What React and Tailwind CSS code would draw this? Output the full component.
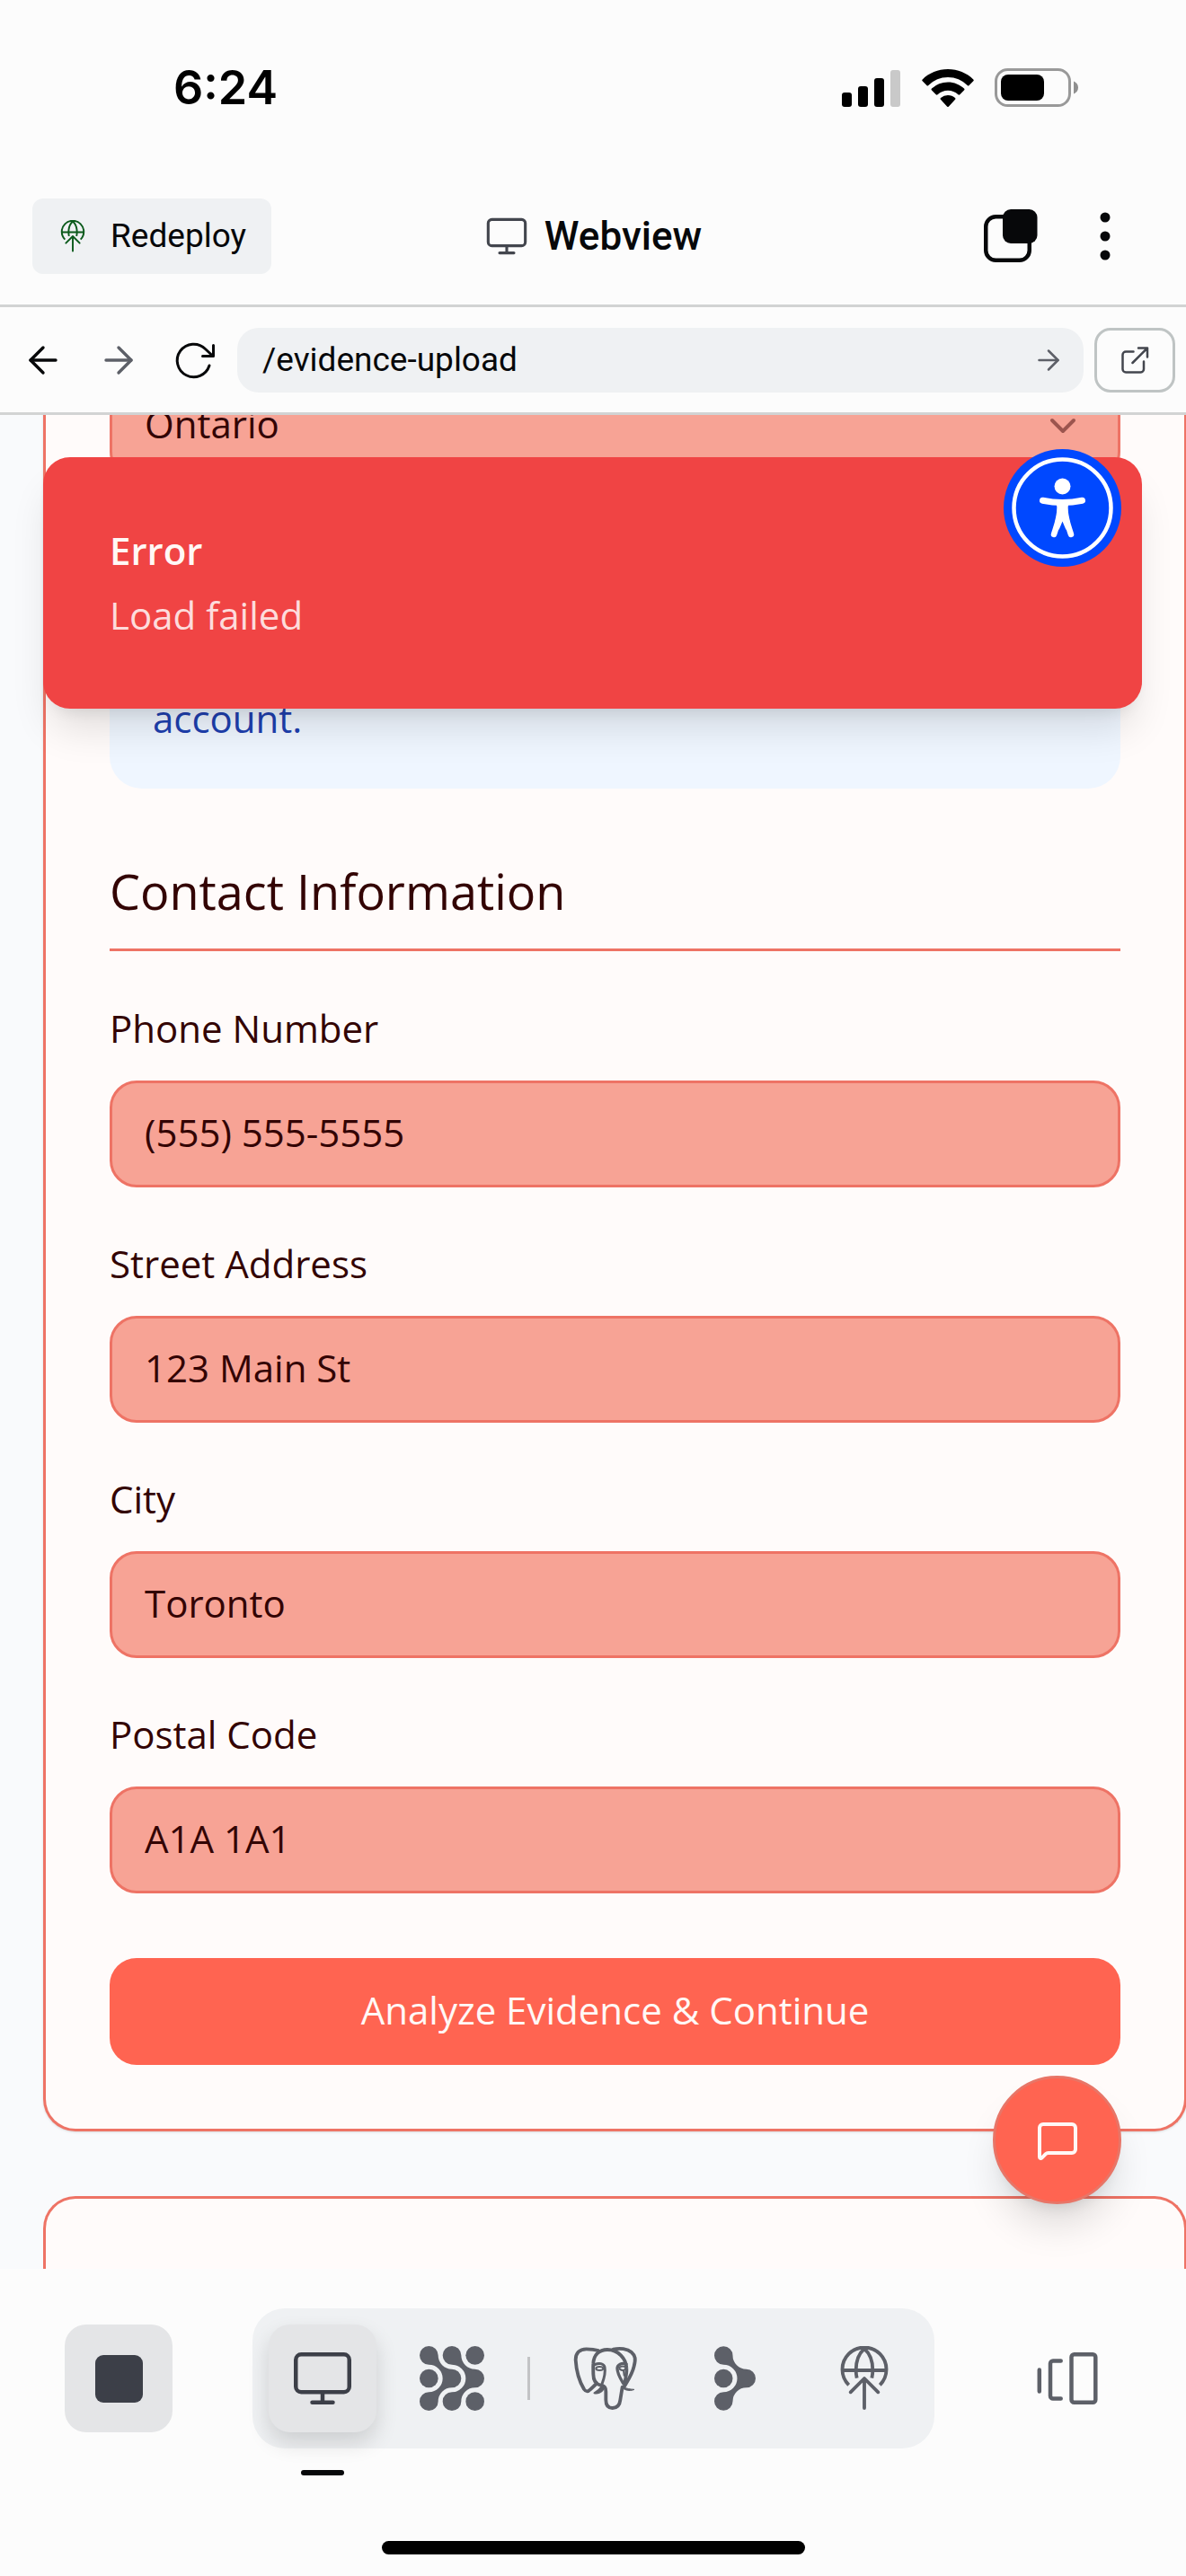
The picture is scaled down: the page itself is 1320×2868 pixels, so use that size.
import { ArrowLeft, ArrowRight, ChevronDown, MessageSquare } from "lucide-react";

const FLOW =
  "M31 0A31 31 0 0 1 62 31A46 46 0 0 0 108 77A31 31 0 0 1 108 139A46 46 0 0 0 62 185A31 31 0 1 1 31 154A46 46 0 0 0 77 108A46 46 0 0 0 31 62A31 31 0 0 1 31 0Z";

function SignalIcon() {
  return (
    <svg width="66" height="42" viewBox="0 0 66 42" aria-hidden="true">
      <rect x="0" y="26" width="11" height="16" rx="3" />
      <rect x="18" y="19" width="11" height="23" rx="3" />
      <rect x="36" y="10" width="11" height="32" rx="3" />
      <rect x="54" y="1" width="11" height="41" rx="3" fill="#c9c9c9" />
    </svg>
  );
}

function WifiIcon() {
  return (
    <svg width="58" height="42" viewBox="0 0 58 42" aria-hidden="true">
      <path d="M29 0C40 0 50 4.300 57.300 11.400a1.300 1.300 0 0 1 0 1.900L52.600 18a1.300 1.300 0 0 1-1.900 0A31 31 0 0 0 29 9a31 31 0 0 0-21.700 9 1.300 1.300 0 0 1-1.900 0L.7 13.300a1.300 1.300 0 0 1 0-1.900C8 4.300 18 0 29 0Z" />
      <path d="M29 14.500c7 0 13.300 2.700 18 7.100a1.300 1.300 0 0 1 0 2L42.300 28.300a1.400 1.400 0 0 1-1.900 0A16.800 16.800 0 0 0 29 23.800a16.800 16.800 0 0 0-11.400 4.500 1.400 1.400 0 0 1-1.900 0L11 23.600a1.300 1.300 0 0 1 0-2 26.500 26.500 0 0 1 18-7.100Z" />
      <path d="M29 29c3.100 0 5.900 1.100 8 2.900.6.500.6 1.300.1 1.900L30 41.500a1.300 1.300 0 0 1-2 0l-7.100-7.700c-.5-.6-.5-1.400.1-1.900A12.400 12.400 0 0 1 29 29Z" />
    </svg>
  );
}

function BatteryIcon() {
  return (
    <svg width="94" height="44" viewBox="0 0 94 44" aria-hidden="true">
      <rect x="1.500" y="1.500" width="82" height="40" rx="13" fill="none" stroke="#999" strokeWidth="3" />
      <rect x="7" y="7" width="48" height="29" rx="8" />
      <path d="M88 14.500c3.200 1.200 5 4 5 7s-1.800 5.800-5 7Z" fill="#8f8f8f" />
    </svg>
  );
}

function MonitorIcon({ className }) {
  return (
    <svg className={className} viewBox="0 0 72 72" fill="none" stroke="currentColor" strokeWidth="4.500" strokeLinecap="round" strokeLinejoin="round" aria-hidden="true">
      <rect x="6.250" y="9.250" width="59.500" height="42" rx="6" />
      <path d="M36 51.500v11M24.500 62.800h23" />
    </svg>
  );
}

function DeployIcon({ className }) {
  return (
    <svg className={className} viewBox="918 66 216 216" fill="none" stroke="currentColor" strokeWidth="11.500" strokeLinecap="round" strokeLinejoin="round" aria-hidden="true">
      <path strokeLinecap="butt" d="M974 196A73.500 73.500 0 1 1 1078 196M953 147H1099M1026 75C1006 92 998 122 998 147 998 156 999 164 1001 173M1026 75C1046 92 1054 122 1054 147 1054 156 1053 164 1051 173" />
      <path d="M1026 175V273M980 220 1026 174 1072 220" />
    </svg>
  );
}

function GridIcon() {
  return (
    <svg className="size-[72px]" viewBox="0 0 216 216" fill="currentColor" aria-hidden="true">
      <path d={FLOW} />
      <path d={FLOW} transform="translate(77 0)" />
      <circle cx="31" cy="108" r="31" />
      <circle cx="185" cy="31" r="31" />
      <circle cx="185" cy="185" r="31" />
    </svg>
  );
}

function FlowIcon() {
  return (
    <svg className="h-[72px] w-[46px]" viewBox="0 0 139 216" fill="currentColor" aria-hidden="true">
      <path d={FLOW} />
      <circle cx="31" cy="108" r="31" />
    </svg>
  );
}

function ElephantIcon() {
  return (
    <svg className="size-[72px]" viewBox="594 66 216 216" fill="none" stroke="currentColor" strokeWidth="11.500" strokeLinecap="round" strokeLinejoin="round" aria-hidden="true">
      <path d="M678 81C662 76 650 76 638 76 614 76 602 90 602 112 604 145 615 185 630 210 637 220 644 219 651 211L668 195" />
      <path d="M686 197C667 193 661 178 661 160 661 150 660 140 661 125 662 96 680 78 708 78 744 78 771 108 772 140 773 155 770 170 766 190" />
      <path d="M728 77C750 72 775 75 788 86 802 98 803 110 797 133 791 160 777 180 764 202" />
      <path d="M690 198C701 200 703 206 703 218V246C703 263 709 273 725 273 742 273 749 264 751 246L758 203" />
      <path strokeWidth="9" d="M666 128C680 121 696 124 699 136 703 156 697 174 690 193" />
      <path strokeWidth="10" d="M771 126C756 121 741 128 741 141 742 162 754 178 762 192" />
      <ellipse cx="682" cy="141" rx="12" ry="6" strokeWidth="6" />
      <path strokeWidth="6" d="M748 138C755 132 764 133 769 137M749 143C756 148 764 147 768 143M762 148 764 164" />
      <path d="M688 202C684 208 680 214 664 223 674 226 688 222 697 208Z" fill="currentColor" strokeWidth="5" />
      <path d="M762 203C774 209 784 210 798 211 788 216 772 216 761 208Z" fill="currentColor" strokeWidth="3" />
    </svg>
  );
}

function CarouselIcon() {
  return (
    <svg className="size-[72px]" viewBox="0 0 72 72" fill="none" stroke="currentColor" strokeWidth="4.500" strokeLinecap="round" strokeLinejoin="round" aria-hidden="true">
      <path d="M4.800 26.500v24M28.700 16.500H20a3 3 0 0 0-3 3v36a3 3 0 0 0 3 3h8.700" />
      <rect x="40.500" y="9.300" width="26.800" height="53.400" rx="3" />
    </svg>
  );
}

function PersonIcon() {
  return (
    <svg className="size-[131px]" viewBox="0 0 131 131" aria-hidden="true">
      <circle cx="65.500" cy="65.500" r="65.500" fill="#0048ff" />
      <circle cx="65.500" cy="65.500" r="54" fill="none" stroke="#fff" strokeWidth="4.500" />
      <circle cx="65.500" cy="41.500" r="9" fill="#fff" />
      <g fill="none" stroke="#fff" strokeLinecap="round" strokeLinejoin="round">
        <path strokeWidth="7" d="M43.500 57.300C58 60.300 73 60.300 87.500 57.300" />
        <path strokeWidth="6.500" d="M62.800 64C62.800 76 59.500 84 56 95M68.200 64C68.200 76 71.500 84 75 95" />
      </g>
      <path fill="#fff" d="M57 60H74Q71.200 62 71.300 65C71.600 71 72 75 73.500 81L69.500 90 65.500 80.500 61.500 90 57.500 81C59 75 59.400 71 59.700 65Q59.800 62 57 60Z" />
    </svg>
  );
}

const FIELDS = [
  { id: "phone", label: "Phone Number", value: "(555) 555-5555", type: "tel" },
  { id: "street", label: "Street Address", value: "123 Main St", type: "text" },
  { id: "city", label: "City", value: "Toronto", type: "text" },
  { id: "postal", label: "Postal Code", value: "A1A 1A1", type: "text" },
];

const TAB = "flex size-[120px] items-center justify-center rounded-[24px]";

export default function App() {
  return (
    <div className="flex min-h-screen flex-col bg-[#fcfcfc] font-['Roboto',sans-serif] text-[#07080a]">
      <div className="flex h-[187px] items-center justify-between pt-2 pr-[119px] pl-[193px] text-black">
        <span className="font-['Inter',sans-serif] text-[52px] leading-none font-semibold">6:24</span>
        <div className="flex items-center gap-[23px]">
          <SignalIcon />
          <WifiIcon />
          <BatteryIcon />
        </div>
      </div>

      <header className="grid h-[155px] grid-cols-[1fr_auto_1fr] items-center border-b-3 border-[#d2d3d3] px-9">
        <button className="flex h-[84px] items-center gap-6 justify-self-start rounded-[12px] bg-[#eff1f3] pr-7 pl-[27px] text-[37px]">
          <DeployIcon className="size-[36px] text-[#0b5a1b]" />
          Redeploy
        </button>
        <h1 className="flex items-center gap-[17px] text-[44px] leading-none font-medium">
          <MonitorIcon className="size-[50px] text-[#43464e]" />
          Webview
        </h1>
        <div className="flex items-center gap-[65px] justify-self-end pr-[44px]">
          <button aria-label="Tabs">
            <svg width="60" height="60" viewBox="0 0 60 60" aria-hidden="true">
              <rect x="2.250" y="8.250" width="48.500" height="48.500" rx="11" fill="none" stroke="#07080a" strokeWidth="4.500" />
              <rect x="21" y="0" width="38.500" height="38" rx="9" fill="#07080a" />
            </svg>
          </button>
          <button aria-label="More options">
            <svg width="20" height="60" viewBox="0 0 20 60" fill="#07080a" aria-hidden="true">
              <circle cx="10" cy="9" r="5.500" />
              <circle cx="10" cy="30" r="5.500" />
              <circle cx="10" cy="51" r="5.500" />
            </svg>
          </button>
        </div>
      </header>

      <nav className="flex h-[120px] items-center border-b-3 border-[#d2d3d3] pr-3 pl-6">
        <button aria-label="Back" className="flex w-12 justify-center">
          <ArrowLeft size={48} strokeWidth={1.7} />
        </button>
        <button aria-label="Forward" className="ml-9 flex w-12 justify-center text-[#5d6068]">
          <ArrowRight size={48} strokeWidth={1.7} />
        </button>
        <button aria-label="Reload" className="ml-9 flex w-12 justify-center">
          <svg width="48" height="48" viewBox="0 0 48 48" fill="none" stroke="currentColor" strokeWidth="3" strokeLinecap="round" strokeLinejoin="round" aria-hidden="true">
            <path d="M41 30A18.300 18.300 0 1 1 36.500 11.500L45 19.500M45.500 7.500V19.500H33.500" />
          </svg>
        </button>
        <div className="ml-6 flex h-[72px] flex-1 items-center rounded-[24px] bg-[#eff1f3] pr-[21px] pl-7">
          <input aria-label="Page path" defaultValue="/evidence-upload" className="min-w-0 flex-1 bg-transparent text-[37px] outline-none" />
          <button aria-label="Go" className="text-[#5d6068]">
            <ArrowRight size={36} strokeWidth={1.7} />
          </button>
        </div>
        <button aria-label="Open in new tab" className="ml-3 flex h-[72px] w-[90px] items-center justify-center rounded-[18px] border-3 border-[#bfc4c4] text-[#43464e]">
          <svg width="36" height="36" viewBox="0 0 36 36" fill="none" stroke="currentColor" strokeWidth="2.500" strokeLinecap="round" strokeLinejoin="round" aria-hidden="true">
            <path d="M16.500 8.500H8a3.500 3.500 0 0 0-3.500 3.500V28A3.500 3.500 0 0 0 8 31.500H24.500A3.500 3.500 0 0 0 28 28V19.500M22 4.500H32V14.500M32 4.500 15.500 21" />
          </svg>
        </button>
      </nav>

      <main className="relative h-[2064px] overflow-hidden bg-[#f9fafc] font-['Open_Sans',sans-serif] text-[42px] text-[#330404]">
        <section className="-mt-12 -mr-px ml-12 rounded-b-[36px] border-3 border-t-0 border-[#ee7365] bg-[#fffbfa] px-[71px] pb-[71px] shadow-sm">
          <div className="grid">
            <select aria-label="Province" defaultValue="Ontario" className="col-start-1 row-start-1 h-[119px] w-full appearance-none rounded-[30px] border-3 border-[#ee7365] bg-[#f7a395] px-9 pb-1">
              <option>Ontario</option>
            </select>
            <ChevronDown size={48} strokeWidth={2} className="pointer-events-none col-start-1 row-start-1 mr-10 self-center justify-self-end text-[#9c554e]" />
          </div>
          <div className="mt-12 flex h-[297px] items-end rounded-[36px] bg-[#eff6ff] p-12 leading-[60px] text-[#1e40af]">
            account.
          </div>
          <h2 className="mt-[74px] border-b-3 border-[#ee7365] pb-6 text-[54px] leading-[80px]">Contact Information</h2>
          <form className="mt-14" onSubmit={(e) => e.preventDefault()}>
            <div className="grid gap-[55px]">
              {FIELDS.map((f) => (
                <div key={f.id} className="grid gap-7">
                  <label htmlFor={f.id} className="leading-[60px]">
                    {f.label}
                  </label>
                  <input id={f.id} type={f.type} defaultValue={f.value} className="h-[119px] w-full rounded-[30px] border-3 border-[#ee7365] bg-[#f7a395] px-9 pb-1" />
                </div>
              ))}
            </div>
            <button type="submit" className="mt-[72px] h-[119px] w-full rounded-[30px] bg-[#ff6451] pb-1 text-[#fff8f6]">
              Analyze Evidence &amp; Continue
            </button>
          </form>
        </section>
        <section className="mt-[72px] -mr-px ml-12 h-[160px] rounded-t-[36px] border-3 border-b-0 border-[#ee7365] bg-[#fffbfa]" />

        <div role="alert" className="absolute top-[47px] right-[49px] left-12 rounded-[30px] bg-[#f04444] p-[74px] shadow-[0_30px_45px_-9px_rgba(0,0,0,0.12),0_12px_18px_-12px_rgba(0,0,0,0.12)]">
          <p className="leading-[60px] font-semibold text-[#fff8f6]">Error</p>
          <p className="mt-3 leading-[60px] text-[#fddcdc]">Load failed</p>
        </div>
        <button aria-label="Accessibility options" className="absolute top-[38px] right-[72px] rounded-full">
          <PersonIcon />
        </button>
        <button aria-label="Open chat" className="absolute right-[72px] bottom-[72px] flex size-[143px] items-center justify-center rounded-full border-3 border-[#e87567] bg-[#ff6451] text-[#fff8f6] shadow-[0_30px_45px_-9px_rgba(0,0,0,0.14),0_12px_18px_-12px_rgba(0,0,0,0.14)]">
          <MessageSquare size={48} strokeWidth={2} />
        </button>
      </main>

      <footer className="flex flex-1 flex-col items-center justify-between pt-11 pb-6">
        <div className="flex w-full items-center justify-between px-[72px] text-[#5d6068]">
          <button aria-label="Stop" className="flex size-[120px] items-center justify-center rounded-[24px] bg-[#e4e5e7]">
            <span className="size-[53px] rounded-[9px] bg-[#3c3f48]" />
          </button>
          <div className="flex h-[156px] items-center gap-6 rounded-[36px] bg-[#eff1f3] px-[18px]">
            <button aria-label="Webview" className="relative flex size-[120px] items-center justify-center rounded-[24px] bg-[#e4e5e7] text-[#3c3f48] shadow-[0_12px_24px_rgba(0,0,0,0.14)]">
              <MonitorIcon className="size-[72px]" />
              <span className="absolute top-[162px] h-1.5 w-12 rounded-[3px] bg-[#07080a]" />
            </button>
            <button aria-label="Tools" className={TAB}>
              <GridIcon />
            </button>
            <span className="h-12 w-[3px] bg-[#c2c3c5]" />
            <button aria-label="Database" className={TAB}>
              <ElephantIcon />
            </button>
            <button aria-label="Workflows" className={TAB}>
              <FlowIcon />
            </button>
            <button aria-label="Deployments" className={TAB}>
              <DeployIcon className="size-[72px]" />
            </button>
          </div>
          <button aria-label="Switch view" className={TAB}>
            <CarouselIcon />
          </button>
        </div>
        <div className="h-[15px] w-[471px] rounded-full bg-black" />
      </footer>
    </div>
  );
}
